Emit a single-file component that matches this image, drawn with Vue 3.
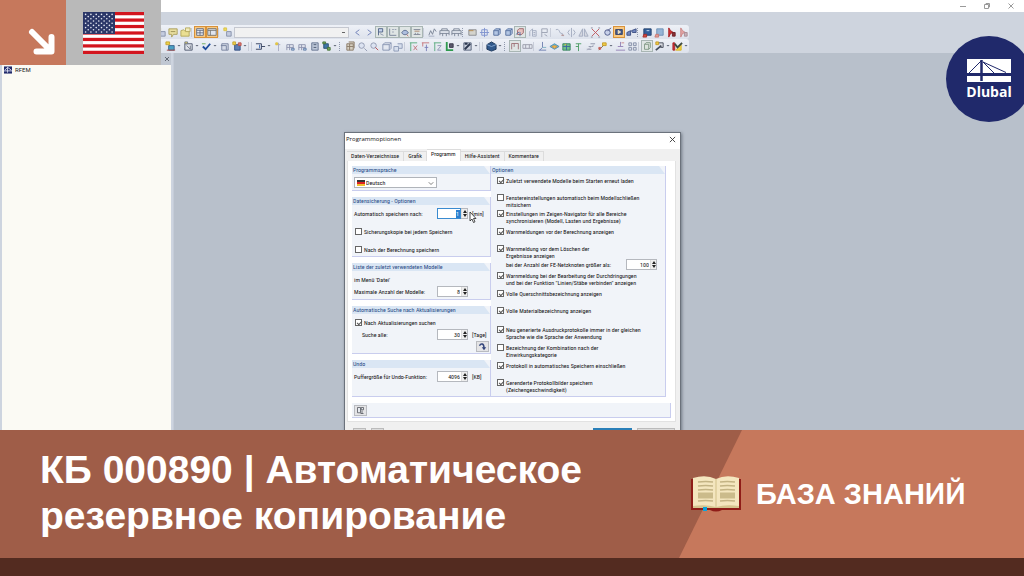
<script setup>
import { ref } from 'vue'

const ink = '#5f6f92'
const pale = '#a3acc0'
const icons = {
  bubble: [['M1 2h9v6H6l-2 3V8H1z', '#e9dfa0', '#a99e5c'], ['M3 5h5', 'none', '#9a9053']],
  folder: [['M1 4l3-1 1 1h5v6H1z', '#eadf93', '#b5a85c'], ['M6 1h5v4H6z', '#f3ecbc', '#b5a85c']],
  layout: [['M2 2h8v8H2z', '#e9edf4', '#5b6479'], ['M2 4h8M6 4v6M2 7h8', 'none', '#5b6479']],
  table: [['M1 2h10v8H1z', '#dfe4ee', '#6b6a66'], ['M1 4h10M4 4v6', 'none', '#6b6a66']],
  star: [['M5 5h5v5H5z', '#c4ccdf', '#8892ab'], ['M2 1h3v3H2z', '#f0dc5a', '#d8c24a']],
  left: [['M8 3L4 6l4 3', 'none', '#6f7fb8']],
  right: [['M4 3l4 3-4 3', 'none', '#6f7fb8']],
  load: [['M3 10V2h5v4H3', '#c5d2ea', '#46597f'], ['M5 8l4 2', 'none', '#7d8aa5']],
  axis: [['M2 2v8h8', 'none', '#6b788f'], ['M5 3h2M8 3h2M5 6h2', 'none', '#8a93a8']],
  eye: [['M2 7c2-4 6-4 8 0-2 3-6 3-8 0z', '#aebfdf', '#4f6387'], ['M8 9l2 2', 'none', '#b55a54']],
  dims: [['M2 3h8M2 9h8M4 7v2M7 7v2', 'none', '#7c8293'], ['M3 5h6', 'none', '#a5785c']],
  hand: [['M2 9l2-5 2 4 2-6 2 3', 'none', '#7b8496'], ['M2 10h6', 'none', pale]],
  truss: [['M1 9V4h10v5M3 4V2h6v2M1 7h10M4 7v3M8 7v3', 'none', '#7b8496']],
  panel: [['M2 3h8v6H2z', '#d4d3cd', '#8b8c90'], ['M2 4h5', 'none', '#b58b50']],
  target: [['M3 3h6v6H3zM6 1v10M1 6h10', 'none', '#7f93cf']],
  cube: [['M3 4l2-2h5v5L8 9H3z', '#b3c6e4', '#58719f'], ['M3 4h5v5M8 4l2-2', 'none', '#58719f']],
  cubeRed: [['M3 4l2-2h5v5L8 9H3z', '#e7c2c0', '#985b62'], ['M1 9l4-3M6 11V6', 'none', '#4e71a8']],
  building: [['M3 10V5l3-3v8M6 10h4V4H6M7 6h2M7 8h2', 'none', pale]],
  flagp: [['M3 11V2h6v4H3M6 8l3 2', 'none', '#9ba2b2']],
  curve: [['M2 3c5-2 3 5 7 4l1 3', 'none', pale], ['M8 9h3', 'none', '#b48986']],
  mirror: [['M6 1v10M4 3L2 6l2 3M8 3l2 3-2 3', 'none', pale]],
  cone: [['M5 2v8H1zM7 2v8h4z', '#d6d9e1', pale]],
  cross: [['M2 2l8 8M10 2l-8 8', 'none', '#c0565d'], ['M1 1h2M9 1h2M1 11h2M9 11h2', 'none', '#8b8fa0']],
  orbit: [['M3 6a3 3 0 1 0 6 0 3 3 0 1 0-6 0z', '#c8d1ea', '#4b5888'], ['M6 4l4-3', 'none', '#4b5888']],
  view: [['M2 3h8v6H2z', '#44598b', '#303f66'], ['M5 4l3 2-3 2z', '#f6e5bf', '#f6e5bf']],
  binoc: [['M1 6l4-2v5H1zM6 4l5-2v4H7z', '#7186bd', '#3c4f83']],
  disk: [['M2 2h8v7H2z', '#335f9b', '#24436f'], ['M2 8h3v3H1z', '#d34b42', '#a92f2b'], ['M5 4h3', 'none', '#cfe0f2']],
  diskPale: [['M3 2h7v7H3z', '#96b5d7', '#6d8fb5'], ['M2 8h3v3H1z', '#e19c96', '#c97872']],
  pdf: [['M3 1l2 3 3 2-3 1-2 4z', '#cf3333', '#a61f23'], ['M7 6h3v4H7z', '#8a2f35', '#6c2229']],
  pdfPale: [['M3 1l2 3 3 2-3 1-2 4z', '#e2a5a5', '#c98484'], ['M7 6h3v4H7z', '#c9b0b8', '#a68d96']],
  newBox: [['M4 5h6v5H4z', '#4aa0c4', '#38618d'], ['M1 1h4v3H1z', '#eed249', '#c5a32f'], ['M2 10h9', 'none', '#a84c47']],
  frame: [['M2 3h8v7H2z', '#dfe3ea', '#4f596d'], ['M2 1h3v2H2zM4 5l4 4M8 5v4', '#f0dc5a', '#73798a']],
  checkBlue: [['M2 6l3 3 5-6', 'none', '#1e4c9b', 2], ['M1 3h4', 'none', '#6fae5b']],
  solid: [['M3 3h7v7H3z', '#d5dbe8', '#76829e'], ['M2 5h6v5', 'none', '#76829e']],
  build: [['M4 4h6v6H4z', '#5d7fb4', '#324f80'], ['M2 1h3v3H2z', '#eed249', '#c5a32f'], ['M8 2h3v3H8z', '#dd7c74', '#b9534d']],
  member: [['M1 3h6v6H1M7 6h4', 'none', '#34415e', 1], ['M5 4v4', 'none', '#3566b4']],
  arrowG: [['M6 2v9M3 4h5', 'none', '#a8abc2'], ['M3 2h2v2H3z', '#eed249', '#dfc23c']],
  spectra: [['M2 10V4h7v6M2 7h7M5 4v6', 'none', '#8d93ae'], ['M7 8h3v2H7z', '#a8bfdf', '#6a85ac']],
  calc: [['M3 2h7v8H3z', '#bdc7d8', '#66748f'], ['M5 4h3M5 7h3', 'none', '#49586f']],
  gear: [['M3 3h5v5H3z', '#3f77a7', '#2b5274'], ['M2 1h3v2H2zM7 7h3v3H7z', '#74a957', '#47743a']],
  grid: [['M2 3h7v7H2zM4 1h6v7', '#d5cec0', '#8b7c69'], ['M2 6h7M5 3v7', 'none', '#8b7c69']],
  zoom: [['M2 5a3 3 0 1 0 6 0 3 3 0 1 0-6 0zM8 8l3 3', '#dce3f1', '#9099b0']],
  zoomRed: [['M2 5a3 3 0 1 0 6 0 3 3 0 1 0-6 0z', '#dce3f1', '#9099b0'], ['M7 7l3 3', 'none', '#b8484c']],
  box: [['M2 4l2-2h7v6l-2 2H2zM2 4h7v6M9 4l2-2', 'none', '#8794b1']],
  boxes: [['M1 6h5v5H1zM5 3h5v5H6', '#d7dfed', '#8d9ab6']],
  axX: [['M2 2h8M3 2v9', 'none', '#58aa7d'], ['M6 5l4 5M10 5l-4 5', 'none', '#c4767c']],
  axY: [['M2 2h8M3 2v4', 'none', '#c4767c'], ['M7 4v7M5 7h4', 'none', '#7c80b9']],
  axZ: [['M2 2h8M3 2v9', 'none', '#58aa7d'], ['M6 5h4l-4 5h4', 'none', '#8f96b3']],
  axes: [['M3 1v9h7', 'none', '#2f9a4e', 2], ['M6 3h4v4H6z', '#5a586c', '#3b3b4c']],
  cut: [['M2 2h8v8H2z', '#c8cedb', '#59647c'], ['M3 9l6-6M3 3h3', 'none', '#2c3850', 2]],
  cubeDark: [['M6 1l5 3v5l-5 2-5-2V4z', '#31598c', '#1d3658'], ['M1 4l5 2 5-2', 'none', '#86a9d2']],
  moment: [['M2 10V3h8v7M5 3v4', 'none', '#99666c']],
  hundred: [['M1 4h10v4H1zM4 4v4M8 4v4', 'none', '#9a9dab']],
  support: [['M6 1v6M2 10h8M6 7L3 10', 'none', '#6e7fb0'], ['M6 7h4', 'none', '#7db0c4']],
  rainbow: [['M1 6l5-3 5 3-5 3z', '#67c0ce', '#4a8fbb'], ['M3 6l3-1 3 1-3 2z', '#e8c34b', '#d98b45']],
  mesh: [['M2 3h8v7H2z', '#6fc08c', '#38845c'], ['M2 6h8M6 3v7', 'none', '#3d68a1'], ['M4 4h2', 'none', '#e3c13d']],
  tree: [['M6 11V3M3 3h6M3 6h3', 'none', '#4c9c64']],
  steps: [['M2 9h5M4 6h5M6 3h5', 'none', '#8e94a9'], ['M2 10l8-6', 'none', '#b2b7c6']],
  spark: [['M2 10l6-6', 'none', '#7c6c4c'], ['M6 2h4v3H6z', '#efcc43', '#c59b2d'], ['M2 7h2v2H2z', '#c7605b', '#c7605b']],
  base: [['M6 1v5M3 6h6M1 10h10', 'none', '#9582b6'], ['M7 2h3', 'none', '#c98a8a']],
  tiles: [['M2 2h3v3H2zM7 2h3v3H7zM2 7h3v3H2zM7 7h3v3H7z', '#dbe0ea', '#868fa8']],
  stack: [['M3 4l2-2h5v6l-2 2H3z', '#dde4de', '#77917d'], ['M3 4h5v6', 'none', '#77917d']],
  stamp: [['M3 2h7v5H7', '#d9dbe1', '#454c5b'], ['M2 10l6-5', 'none', '#454c5b', 2], ['M2 1h3v3H2z', '#efcc43', '#c59b2d']],
  result: [['M1 2h2v8H1z', '#cf3036', '#a8242b'], ['M4 10L10 4v6z', '#f0d33f', '#d9b32c'], ['M3 3l3 4 5-5', 'none', '#3d4a3f', 2]]
}

const dot = n => ({ k: 'icon', n })
const on = (n, tone) => ({ k: 'icon', n, tone })
const sep = { k: 'sep' }
const grip = { k: 'grip' }
const caret = { k: 'caret' }
const row1 = [
  dot('star'), dot('bubble'), dot('folder'), sep, on('layout', 'hot'), on('table', 'hot'), sep, dot('star'), { k: 'combo' },
  dot('left'), dot('right'), on('load', 'on'), on('axis', 'on'), on('eye', 'on'), on('dims', 'on'), sep,
  dot('hand'), dot('truss'), dot('truss'), grip, dot('panel'), dot('target'), dot('cube'), dot('cube'), on('cubeRed', 'on'), dot('building'), dot('flagp'), sep,
  dot('curve'), dot('mirror'), dot('cone'), dot('cross'), dot('orbit'), on('view', 'hot'), dot('binoc'), grip,
  dot('disk'), dot('diskPale'), dot('pdf'), dot('pdfPale')
]
const row2 = [
  dot('newBox'), caret, dot('frame'), caret, dot('checkBlue'), caret, dot('solid'), dot('build'), caret, sep, sep,
  dot('member'), caret, dot('arrowG'), dot('spectra'), dot('spectra'), dot('calc'), dot('gear'), caret, grip,
  dot('grid'), dot('zoom'), dot('zoomRed'), dot('box'), dot('boxes'), sep, dot('axX'), dot('axY'), dot('axZ'), dot('axes'), caret, dot('cut'), caret, sep, sep,
  dot('cubeDark'), caret, grip, on('moment', 'on'), dot('hundred'), sep,
  dot('support'), dot('rainbow'), dot('mesh'), dot('tree'), dot('steps'), dot('spark'), caret, dot('base'), dot('tiles'), sep,
  on('stack', 'on'), dot('stamp'), caret, dot('result'), caret
]

const tabs = ['Daten-Verzeichnisse', 'Grafik', 'Programm', 'Hilfe-Assistent', 'Kommentare']
const activeTab = ref('Programm')

const options = ref([
  { on: true, gap: 'first', lines: ['Zuletzt verwendete Modelle beim Starten erneut laden'] },
  { on: false, gap: 'wide', lines: ['Fenstereinstellungen automatisch beim Modellschließen', 'mitsichern'] },
  { on: true, gap: 'tight', lines: ['Einstellungen im Zeigen-Navigator für alle Bereiche', 'synchronisieren (Modell, Lasten und Ergebnisse)'] },
  { on: true, gap: 'mid', lines: ['Warnmeldungen vor der Berechnung anzeigen'] },
  { on: true, gap: 'wide', lines: ['Warnmeldung vor dem Löschen der', 'Ergebnisse anzeigen'], limit: 'bei der Anzahl der FE-Netzknoten größer als:' },
  { on: true, gap: 'tight', lines: ['Warnmeldung bei der Bearbeitung der Durchdringungen', 'und bei der Funktion "Linien/Stäbe verbinden" anzeigen'] },
  { on: true, gap: 'mid', lines: ['Volle Querschnittsbezeichnung anzeigen'] },
  { on: true, gap: 'wide', lines: ['Volle Materialbezeichnung anzeigen'] },
  { on: true, gap: 'wider', lines: ['Neu generierte Ausdruckprotokolle immer in der gleichen', 'Sprache wie die Sprache der Anwendung'] },
  { on: false, gap: 'mid', lines: ['Bezeichnung der Kombination nach der', 'Einwirkungskategorie'] },
  { on: true, gap: 'mid', lines: ['Protokoll in automatisches Speichern einschließen'] },
  { on: true, gap: 'wide', lines: ['Gerenderte Protokollbilder speichern', '(Zeichengeschwindigkeit)'] }
])
const backupCopy = ref(false)
const saveAfterCalc = ref(false)
const searchUpdates = ref(true)

const stars = []
for (let r = 0; r < 9; r++) for (let c = 0; c < (r % 2 ? 5 : 6); c++) stars.push([2.6 + c * 5.3 + (r % 2 ? 2.6 : 0), 2.4 + r * 2.2])
</script>

<template>
  <main class="page">
    <section class="desktop">
      <header class="titlebar">
        <button aria-label="Minimieren"><svg viewBox="0 0 8 8"><path d="M1 4.500h6" /></svg></button>
        <button aria-label="Wiederherstellen"><svg viewBox="0 0 8 8"><path d="M1.500 2.500h4v4h-4zM3 2.500v-1h3.500V5h-1" /></svg></button>
        <button aria-label="Schließen"><svg viewBox="0 0 8 8"><path d="M1.500 1.500l5 5M6.500 1.500l-5 5" /></svg></button>
      </header>
      <div class="toolbars">
        <div v-for="(row, r) in [row1, row2]" :key="r" class="toolbar" :class="'row' + (r + 1)">
          <template v-for="(it, i) in row" :key="i">
            <button v-if="it.k === 'icon'" class="tool" :class="it.tone" :aria-label="it.n">
              <svg viewBox="0 0 12 12">
                <path v-for="(p, j) in icons[it.n]" :key="j" :d="p[0]" :fill="p[1]" :stroke="p[2]" :stroke-width="p[3] || 1" />
              </svg>
            </button>
            <select v-else-if="it.k === 'combo'" class="combo" aria-label="Lastfall"><option></option></select>
            <i v-else :class="it.k"></i>
          </template>
        </div>
      </div>
      <div class="work">
        <aside class="navigator">
          <div class="nav-head"><button aria-label="Navigator schließen"><svg viewBox="0 0 8 8"><path d="M2 2l4 4M6 2L2 6" /></svg></button></div>
          <div class="nav-tree">
            <svg class="app-icon" viewBox="0 0 9 8"><path d="M0 0h9v8H0z" fill="#20296b" /><path d="M0 5h9M4 1v6M1 4l3-3 4 3" fill="none" stroke="#dfe3f4" /></svg>
            <span>RFEM</span>
          </div>
        </aside>
      </div>

      <section class="dialog" aria-label="Programmoptionen">
        <header class="dlg-title">
          <span>Programmoptionen</span>
          <button aria-label="Schließen"><svg viewBox="0 0 8 8"><path d="M1 1l6 6M7 1L1 7" /></svg></button>
        </header>
        <nav class="tabs">
          <button v-for="t in tabs" :key="t" :class="{ active: t === activeTab }" @click="activeTab = t">{{ t }}</button>
        </nav>
        <div class="sheet">
          <div class="columns">
            <div class="left">
              <section class="group">
                <h3>Programmsprache</h3>
                <div class="body lang">
                  <div class="lang-box">
                    <i class="de"></i>
                    <select aria-label="Programmsprache"><option>Deutsch</option></select>
                    <svg viewBox="0 0 8 8"><path d="M1 3l3 3 3-3" /></svg>
                  </div>
                </div>
              </section>
              <section class="group g-backup">
                <h3>Datensicherung - Optionen</h3>
                <div class="body roomy">
                  <div class="line">
                    <label for="every">Automatisch speichern nach:</label>
                    <span class="num focus"><input id="every" value="1"><i class="spin"></i></span>
                    <span class="unit">[min]</span>
                  </div>
                  <label class="line check"><input v-model="backupCopy" type="checkbox">Sicherungskopie bei jedem Speichern</label>
                  <label class="line check"><input v-model="saveAfterCalc" type="checkbox">Nach der Berechnung speichern</label>
                </div>
              </section>
              <section class="group g-recent">
                <h3>Liste der zuletzt verwendeten Modelle</h3>
                <div class="body">
                  <div class="line">im Menü 'Datei'</div>
                  <div class="line">
                    <label for="models">Maximale Anzahl der Modelle:</label>
                    <span class="num"><input id="models" value="8"><i class="spin"></i></span>
                    <span class="unit"></span>
                  </div>
                </div>
              </section>
              <section class="group g-update">
                <h3>Automatische Suche nach Aktualisierungen</h3>
                <div class="body">
                  <label class="line check"><input v-model="searchUpdates" type="checkbox">Nach Aktualisierungen suchen</label>
                  <div class="line indent">
                    <label for="days">Suche alle:</label>
                    <span class="num"><input id="days" value="30"><i class="spin"></i></span>
                    <span class="unit">[Tage]</span>
                  </div>
                  <button class="small-btn end" aria-label="Jetzt suchen"><svg viewBox="0 0 12 12"><path d="M2 5c2-4 6-3 6 3" fill="none" stroke="#34467d" stroke-width="2" /><path d="M5 7h6l-3 4z" fill="#34467d" /></svg></button>
                </div>
              </section>
              <section class="group g-undo">
                <h3>Undo</h3>
                <div class="body">
                  <div class="line">
                    <label for="undo">Puffergröße für Undo-Funktion:</label>
                    <span class="num"><input id="undo" value="4096"><i class="spin"></i></span>
                    <span class="unit">[KB]</span>
                  </div>
                </div>
              </section>
            </div>
            <section class="group options">
              <h3>Optionen</h3>
              <div class="opt-list">
                <div v-for="(o, i) in options" :key="i" :class="o.gap">
                  <label class="opt">
                    <input v-model="o.on" type="checkbox">
                    <span><template v-for="(l, j) in o.lines" :key="j"><br v-if="j">{{ l }}</template></span>
                  </label>
                  <div v-if="o.limit" class="limit">
                    <label for="limit">{{ o.limit }}</label>
                    <span class="num"><input id="limit" value="100"><i class="spin"></i></span>
                  </div>
                </div>
              </div>
            </section>
          </div>
          <div class="sheet-foot">
            <button class="small-btn" aria-label="Details"><svg viewBox="0 0 12 12"><path d="M2 2h4v7H2zM7 2h3v3H7zM8 6v4M6 10h4" fill="#e8ebf0" stroke="#4b4f57" /></svg></button>
          </div>
        </div>
        <footer class="dlg-foot"><button aria-label="Hilfe"></button><button aria-label="Standard"></button><i></i><button class="ok" aria-label="OK"></button><button class="cancel" aria-label="Abbrechen"></button></footer>
        <svg class="pointer" viewBox="0 0 8 12"><path d="M1 1v9l2-2 1.500 3.500 1.500-.700L4.500 7.500H7z" fill="#fff" stroke="#222" stroke-width=".8" /></svg>
      </section>

      <div class="badges">
        <div class="arrow"><svg viewBox="0 0 66 65"><path d="M32 32l19 19M36.500 51.500h15V37" fill="none" stroke="#fff" stroke-width="6" stroke-linecap="round" stroke-linejoin="round" /></svg></div>
        <div class="flag">
          <svg viewBox="0 0 61 42">
            <path d="M0 0h61v42H0z" fill="#fff" />
            <rect v-for="n in 7" :key="n" x="0" :y="(n - 1) * 6.460" width="61" height="3.230" fill="#d3151e" />
            <path d="M0 0h32v22H0z" fill="#2b3768" />
            <circle v-for="(s, i) in stars" :key="i" :cx="s[0]" :cy="s[1]" r=".8" fill="#e8ebf5" />
          </svg>
        </div>
      </div>

      <div class="logo">
        <svg viewBox="0 0 44 23"><path d="M0 0h44v14H0zM0 17h44v6H0z" fill="#fff" /><path d="M14.500 1v21" stroke="#20296b" stroke-width="2.500" /><path d="M2 14L14 2M16 3l11 11M16 3l23 10.500" fill="none" stroke="#20296b" stroke-width="1" /></svg>
        <span>Dlubal</span>
      </div>
    </section>

    <section class="banner">
      <h1>КБ 000890 | Автоматическое<br>резервное копирование</h1>
      <div class="kb">
        <svg viewBox="0 0 50 36">
          <path d="M0 3h50v31H31q-6 3-12 0H0z" fill="#8f1d18" />
          <path d="M2 2q13-4 23 1 10-5 23-1v30H2z" fill="#f4e6bf" />
          <path d="M2 30q13-2 23 1 10-3 23-1v2H2z" fill="#d5c48f" />
          <path d="M25 3v28" stroke="#e3d3a4" stroke-width="2" />
          <path d="M7 6q8-1 15 0M7 10q8-1 15 0M7 14q8-1 15 0M7 25q8-1 15 0M29 6q7-1 15 0M29 10q7-1 15 0M29 14q7-1 15 0M29 25q7-1 15 0" fill="none" stroke="#c3b384" stroke-width="1.500" />
          <path d="M7 16.500h15v6H7zM29 16.500h15v6H29z" fill="#cbbb8b" />
          <path d="M12 31h4v4h-4z" fill="#0aa3dc" />
        </svg>
        <strong>БАЗА ЗНАН<span>ИЙ</span></strong>
      </div>
    </section>
    <div class="strip"></div>
  </main>
</template>

<style>
body { background: #532b20; }
</style>

<style scoped>
* { box-sizing: border-box; }
button, input, select { font: inherit; color: inherit; margin: 0; padding: 0; border: 0; background: none; border-radius: 0; outline: none; }
button { display: block; }
svg { display: block; }
.page { min-height: 100vh; display: flex; flex-direction: column; overflow: hidden; font-family: "Roboto Condensed", Lato, "Liberation Sans", sans-serif; }
.desktop { position: relative; flex: 1; display: flex; flex-direction: column; overflow: hidden; background: #b8c0cb; }
.titlebar { height: 12px; background: #fff; display: flex; justify-content: flex-end; align-items: center; gap: 16px; padding-right: 9px; }
.titlebar svg { width: 8px; height: 8px; fill: none; stroke: #9a9a9a; }
.toolbars { background: #ced4de; padding: 13px 0 0; height: 41px; }
.toolbar { display: flex; align-items: center; height: 14px; width: max-content; background: linear-gradient(#eef1f7, #dde2ec); border-radius: 0 3px 3px 0; }
.row1 { padding-left: 155px; }
.row2 { padding-left: 164px; }
.tool { width: 12px; height: 12px; flex: none; }
.tool svg { width: 11px; height: 11px; margin: auto; }
.tool.hot { background: #f8c983; border: 1px solid #d8923a; }
.tool.on { background: #dfe5e4; border: 1px solid #a9b6b4; }
.tool.hot svg, .tool.on svg { width: 10px; height: 10px; }
.combo { width: 115px; height: 11px; margin: 0 2px 0 1px; background: #f1f1f1; border: 1px solid #c5c8d0; appearance: none; background-image: linear-gradient(#666, #666); background-size: 3px 1px; background-repeat: no-repeat; background-position: right 3px center; }
.sep { width: 3px; height: 9px; border-left: 1px solid #c8cdd9; }
.grip { width: 4px; height: 9px; border-left: 1px dotted #9099ad; }
.row2 .grip { width: 5px; margin-left: 1px; }
.caret { width: 6px; height: 3px; background: #5d6474; clip-path: polygon(1px 0, 5px 0, 3px 2px); }
.work { flex: 1; display: flex; }
.navigator { width: 174px; display: flex; flex-direction: column; background: #cdd4df; padding: 0 2px; border-right: 1px solid #c4cbd7; }
.nav-head { height: 12px; display: flex; justify-content: flex-end; align-items: center; background: #c0c7d2; }
.nav-head svg { width: 8px; height: 8px; stroke: #626874; fill: none; }
.nav-tree { flex: 1; background: #fbfaf4; display: flex; align-items: flex-start; gap: 3px; padding: 1px 2px; font: 6px/8px Roboto, sans-serif; color: #222; }
.app-icon { width: 8px; height: 8px; }

.dialog { position: absolute; left: 344px; top: 132px; width: 337px; background: #f0f0f0; border: 1px solid #6b727c; box-shadow: 1px 1px 3px #6f7884; font-size: 6px; line-height: 7px; color: #111; white-space: nowrap; }
.dlg-title { height: 16px; display: flex; align-items: center; justify-content: space-between; background: #fff; padding: 0 4px 4px 1px; font: 6px/8px "Open Sans", sans-serif; }
.dlg-title svg { width: 7px; height: 7px; fill: none; stroke: #333; }
.tabs { display: flex; align-items: flex-end; height: 12px; padding-left: 2px; }
.tabs button { height: 10px; padding: 0 4px 2px; border: 1px solid #dcdcdc; border-bottom: 0; border-left: 0; }
.tabs .active { height: 12px; background: #fff; padding-bottom: 4px; }
.sheet { background: #fff; margin: 0 4px 0 2px; padding: 5px 4px 3px; border: 1px solid #e2e2e2; border-top: 0; }
.columns { display: flex; align-items: stretch; padding-right: 5px; }
.left { flex: none; width: 139px; display: flex; flex-direction: column; gap: 6px; }
.group { background: #f1f4f9; border: 0 solid #c9cdee; border-width: 0 1px 1px 0; }
.group h3 { margin: 0; height: 8px; font-size: 6px; line-height: 8px; font-weight: 400; color: #274a84; padding-left: 1px; background: #dae6f4; clip-path: polygon(0 0, calc(100% - 6px) 0, 100% 100%, 0 100%); }
.g-backup { min-height: 60px; }
.g-recent { min-height: 37px; }
.g-update { min-height: 48px; }
.g-undo { min-height: 37px; }
.body { padding: 3px 0 0 2px; display: flex; flex-direction: column; gap: 1px; }
.lang { padding-bottom: 2px; }
.roomy { gap: 7px; }
.line { height: 11px; display: flex; align-items: center; }
.line > label:first-child { flex: 1; min-width: 0; }
.indent { padding-left: 8px; }
.num { width: 31px; height: 11px; display: flex; border: 1px solid #b5b8be; background: #fff; flex: none; }
.num input { width: 23px; text-align: right; padding-right: 1px; line-height: 9px; }
.spin { width: 7px; margin: 0 0 0 auto; background: #eee; border-left: 1px solid #ddd; position: relative; }
.spin::before, .spin::after { content: ""; position: absolute; left: 1px; border: 2px solid transparent; }
.spin::before { border-bottom-color: #222; top: -1px; border-bottom-width: 3px; }
.spin::after { border-top-color: #222; bottom: -1px; border-top-width: 3px; }
.focus input { border: 1px solid #3a8bd0; margin: -1px 0 -1px -1px; width: 24px; color: #fff; background: linear-gradient(#2a7fd0, #2a7fd0) right 0 center / 4px 8px no-repeat #fff; }
.unit { width: 22px; padding-left: 4px; flex: none; }
.check { gap: 1px; }
input[type="checkbox"] { appearance: none; width: 7px; height: 7px; flex: none; border: 1px solid #666; background: #fff; display: block; margin: 0 1px 0 1px; }
input[type="checkbox"]:checked::before { content: ""; display: block; width: 4px; height: 2px; margin: 1px 0 0 1px; border: solid #555; border-width: 0 0 1px 1px; transform: rotate(-45deg); }
.lang-box { display: flex; align-items: center; width: 83px; height: 11px; border: 1px solid #b0b4ba; background: #fff; padding: 0 2px; gap: 1px; }
.lang-box select { flex: 1; appearance: none; }
.lang-box svg { width: 6px; height: 6px; fill: none; stroke: #555; }
.de { width: 8px; height: 6px; background: linear-gradient(#333 0 2px, #d22 2px 4px, #f0c030 4px); }
.small-btn { width: 13px; height: 11px; background: #e4e4e6; border: 1px solid #b9bbc0; display: flex; align-items: center; justify-content: center; }
.small-btn svg { width: 9px; height: 9px; }
.end { align-self: flex-end; margin-right: 1px; }
.options { flex: 1; }
.opt-list { padding: 3px 0 0 5px; }
.opt { display: flex; gap: 1px; }
.tight { margin-top: 2px; }
.mid { margin-top: 4px; }
.wide { margin-top: 10px; }
.wider { margin-top: 12px; }
.limit { display: flex; align-items: center; justify-content: space-between; padding: 0 8px 0 10px; height: 11px; }
.sheet-foot { margin-top: 6px; height: 15px; background: #f1f4f9; border: 1px solid #c9cdee; border-width: 0 1px 1px 0; padding: 2px; }
.dlg-foot { height: 24px; padding: 6px 5px 6px 8px; display: flex; gap: 5px; }
.dlg-foot i { flex: 1; }
.dlg-foot button { width: 13px; height: 14px; background: #dcdcdc; border: 1px solid #bbb; }
.dlg-foot .ok { width: 39px; border: 2px solid #2a7fb8; }
.dlg-foot .cancel { width: 38px; }
.pointer { position: absolute; left: 124px; top: 78px; width: 8px; height: 12px; }

.badges { position: absolute; left: 0; top: 0; display: flex; }
.arrow { width: 66px; height: 65px; background: #c6785c; }
.flag { width: 95px; height: 65px; background: #b9b9b9; padding: 12px 17px 11px; }
.flag svg { width: 61px; height: 42px; }
.logo { position: absolute; right: -8px; top: 36px; width: 86px; height: 86px; border-radius: 50%; background: #20296b; display: flex; flex-direction: column; align-items: center; padding-top: 23px; color: #fff; font: 700 14px/20px "Open Sans", sans-serif; }
.logo svg { width: 44px; height: 23px; }

.banner { display: flex; min-height: 128px; background: #9f5d48; color: #fff; font-family: "Liberation Sans", Arial, sans-serif; }
h1 { flex: 1; margin: 0; padding: 17px 0 0 40px; font-size: 39px; line-height: 46px; font-weight: 700; white-space: nowrap; }
.kb { position: relative; isolation: isolate; width: 345px; display: flex; align-items: center; gap: 15px; padding-left: 12px; }
.kb::before { content: ""; position: absolute; inset: 0; z-index: -1; background: #c6785c; clip-path: polygon(63px 0, 100% 0, 100% 100%, 0 100%); }
.kb svg { width: 50px; height: 36px; }
.kb strong { font-size: 29px; line-height: 36px; white-space: nowrap; }
.kb strong span { font-family: Roboto, sans-serif; font-weight: 500; }
.strip { height: 18px; background: #532b20; }
</style>
